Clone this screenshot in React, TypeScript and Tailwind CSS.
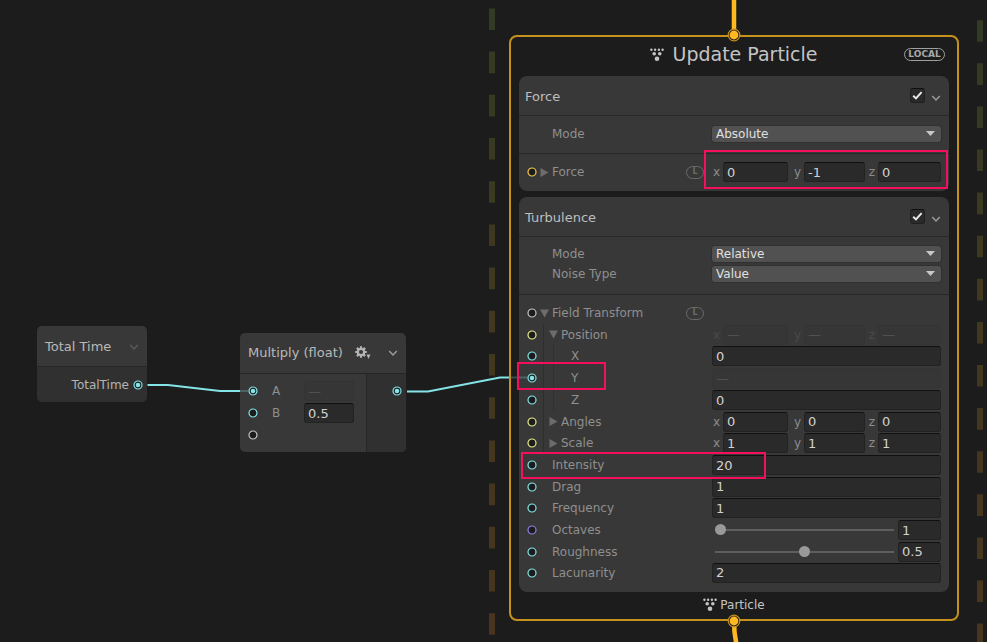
import type { ReactNode } from "react";
import clsx from "clsx";

type PortColor = "cyan" | "yellow" | "orange" | "purple" | "gray";

const portStroke: Record<PortColor, string> = {
  cyan: "#84e4e7",
  yellow: "#e6ec83",
  orange: "#f2c94c",
  purple: "#8f7fe8",
  gray: "#c4c4c4",
};

const Port = ({ color, connected = false }: { color: PortColor; connected?: boolean }) => (
  <svg width="10" height="10" viewBox="0 0 10 10" className="shrink-0">
    <circle cx="5" cy="5" r="4" fill="#1c1c1c" stroke={portStroke[color]} strokeWidth="1.2" />
    {connected && <circle cx="5" cy="5" r="2.3" fill={portStroke[color]} />}
  </svg>
);

const Arrow = ({ open }: { open: boolean }) => (
  <svg width="9" height="9" viewBox="0 0 9 9" className="shrink-0" fill="#6c6c6c">
    {open ? <path d="M0 0.5H9L4.5 8.5Z" /> : <path d="M0.5 0V9L8.5 4.5Z" />}
  </svg>
);

const Chevron = ({ color = "#9a9a9a" }: { color?: string }) => (
  <svg width="10" height="10" viewBox="0 0 10 10" className="shrink-0">
    <path d="M1.2 3L5 7L8.8 3" fill="none" stroke={color} strokeWidth="1.5" />
  </svg>
);

const ParticleIcon = () => (
  <svg width="14" height="14" viewBox="0 0 14 14" fill="#c4c4c4" className="shrink-0">
    <circle cx="1.4" cy="1.8" r="1.2" />
    <circle cx="5.1" cy="1.8" r="1.2" />
    <circle cx="8.9" cy="1.8" r="1.2" />
    <circle cx="12.6" cy="1.8" r="1.2" />
    <circle cx="4.2" cy="5.8" r="1.8" />
    <circle cx="9.8" cy="5.8" r="1.8" />
    <circle cx="7" cy="10.8" r="2.3" />
  </svg>
);

const GearIcon = () => (
  <svg width="16" height="14" viewBox="0 0 16 14" className="shrink-0">
    <circle cx="6" cy="6" r="3.2" fill="none" stroke="#b4b4b4" strokeWidth="2.2" />
    <g stroke="#b4b4b4" strokeWidth="2.2">
      <path d="M6 0.2V2.6M6 9.4V11.8M0.2 6H2.6M9.4 6H11.8" />
      <path d="M1.9 1.9L3.6 3.6M8.4 8.4L10.1 10.1M10.1 1.9L8.4 3.6M3.6 8.4L1.9 10.1" />
    </g>
    <path d="M11.5 8.5H15.5L13.5 13Z" fill="#b4b4b4" />
  </svg>
);

const LocalBadge = () => (
  <span className="flex h-[13px] w-[18px] shrink-0 items-center justify-center rounded-full border border-[#6a6a6a] text-[8px] font-bold leading-none text-[#6a6a6a]">
    L
  </span>
);

const Field = ({ value, label, disabled = false }: { value: string; label: string; disabled?: boolean }) => (
  <input
    type="text"
    aria-label={label}
    defaultValue={value}
    disabled={disabled}
    className={clsx(
      "block h-5 w-full min-w-0 rounded-[3px] border px-[3px] text-[13px] leading-4",
      disabled
        ? "border-[#343434] bg-[#363636] text-[#505050]"
        : "border-[#222222] border-t-[#101010] bg-[#2a2a2a] text-[#d2d2d2]"
    )}
  />
);

const Vector = ({ name, values, disabled = false }: { name: string; values: string[]; disabled?: boolean }) => (
  <div
    className={clsx(
      "grid grid-cols-[11px_65fr_16px_61fr_13px_63fr] items-center text-right text-xs",
      disabled ? "text-[#4a4a4a]" : "text-[#8c8c8c]"
    )}
  >
    {["x", "y", "z"].map((axis, i) => (
      <label key={axis} className="contents">
        <span className="pr-[3px]">{axis}</span>
        <Field label={`${name} ${axis}`} value={values[i]} disabled={disabled} />
      </label>
    ))}
  </div>
);

const Dropdown = ({ id, options }: { id: string; options: string[] }) => (
  <div className="relative">
    <select
      id={id}
      className="block h-4 w-full appearance-none rounded-[3px] bg-[#515151] px-1 text-xs leading-4 text-[#e0e0e0] shadow-[0_0_0_1px_#303030]"
    >
      {options.map((option) => (
        <option key={option}>{option}</option>
      ))}
    </select>
    <svg width="9" height="5" viewBox="0 0 9 5" className="pointer-events-none absolute right-[6px] top-[5px]">
      <path d="M0 0H9L4.5 5Z" fill="#c8c8c8" />
    </svg>
  </div>
);

const Slider = ({ name, value, min, max }: { name: string; value: number; min: number; max: number }) => (
  <div className="flex items-center gap-1 pl-[3px]">
    <input
      type="range"
      aria-label={name}
      min={min}
      max={max}
      step={0.1}
      defaultValue={value}
      className="h-[11px] min-w-0 flex-1 appearance-none bg-transparent [&::-webkit-slider-runnable-track]:h-[2px] [&::-webkit-slider-runnable-track]:bg-[#5e5e5e] [&::-webkit-slider-thumb]:-mt-[5px] [&::-webkit-slider-thumb]:size-[11px] [&::-webkit-slider-thumb]:appearance-none [&::-webkit-slider-thumb]:rounded-full [&::-webkit-slider-thumb]:bg-[#999999]"
    />
    <div className="w-[43px]">
      <Field label={`${name} value`} value={String(value)} />
    </div>
  </div>
);

type RowProps = {
  label: string;
  port?: PortColor;
  connected?: boolean;
  open?: boolean;
  depth?: 0 | 1 | 2;
  local?: boolean;
  height?: string;
  htmlFor?: string;
  children?: ReactNode;
};

const Row = ({ label, port, connected, open, depth = 0, local, height = "h-[22px]", htmlFor, children }: RowProps) => (
  <div className={clsx("flex items-center px-2", height)}>
    <div className="w-[13px] shrink-0">{port && <Port color={port} connected={connected} />}</div>
    {depth > 0 && <div className="ml-[3px] mr-[5px] h-full w-px shrink-0 bg-[#2e2e2e]" />}
    {depth > 1 && <div className="ml-1 mr-[17px] h-full w-px shrink-0 bg-[#303030]" />}
    {depth < 2 && <div className="w-3 shrink-0">{open !== undefined && <Arrow open={open} />}</div>}
    <label htmlFor={htmlFor} className="flex-1 truncate text-xs text-[#8f8f8f]">
      {label}
    </label>
    {local && <LocalBadge />}
    <div className="ml-2 w-[229px] shrink-0">{children}</div>
  </div>
);

const Block = ({ title, children }: { title: string; children: ReactNode }) => (
  <section className="divide-y divide-[#282828] rounded-lg bg-[#383838]">
    <header className="flex h-10 items-center gap-1.5 pl-1.5 pr-2">
      <h2 className="flex-1 pt-[3px] text-[13px] text-[#bebebe]">{title}</h2>
      <span className="relative size-[15px]">
        <input
          type="checkbox"
          defaultChecked
          aria-label={`Enable ${title}`}
          className="block size-[15px] appearance-none rounded-[3px] border border-[#202020] border-t-[#101010] bg-[#2a2a2a]"
        />
        <svg width="15" height="15" viewBox="0 0 15 15" className="pointer-events-none absolute inset-0">
          <path d="M3.2 7.8L6 10.4L11.6 4.2" fill="none" stroke="#e8e8e8" strokeWidth="2" />
        </svg>
      </span>
      <button aria-label={`Collapse ${title}`} className="pt-1">
        <Chevron />
      </button>
    </header>
    {children}
  </section>
);

const FlowPort = () => (
  <svg width="14" height="14" viewBox="0 0 14 14">
    <circle cx="7" cy="7" r="5.8" fill="#1c1c1c" stroke="#c4911c" strokeWidth="1.2" />
    <circle cx="7" cy="7" r="4.4" fill="#ffb821" />
  </svg>
);

const UpdateContext = () => (
  <article className="absolute left-[509px] top-[35px] w-[450px] rounded-lg border-2 border-[#c4911c] bg-[#1c1c1c] px-2">
    <header className="relative flex h-[39px] items-center justify-center gap-2 pb-1">
      <ParticleIcon />
      <h1 className="text-[19px] text-[#c4c4c4]">Update Particle</h1>
      <span className="absolute right-1 top-[11px] flex h-[13px] w-[41px] items-center justify-center rounded-full border border-[#a0a0a0] text-[9px] font-bold leading-none text-[#a8a8a8]">
        LOCAL
      </span>
    </header>
    <div className="flex flex-col gap-1.5">
      <Block title="Force">
        <div className="pb-2 pt-[7px]">
          <Row label="Mode" htmlFor="force-mode">
            <Dropdown id="force-mode" options={["Absolute", "Relative"]} />
          </Row>
        </div>
        <div className="pb-2 pt-[7px]">
          <Row label="Force" port="orange" open={false} local>
            <Vector name="Force" values={["0", "-1", "0"]} />
          </Row>
        </div>
      </Block>
      <Block title="Turbulence">
        <div className="pb-[10px] pt-[7px]">
          <Row label="Mode" htmlFor="turbulence-mode" height="h-5">
            <Dropdown id="turbulence-mode" options={["Relative", "Absolute"]} />
          </Row>
          <Row label="Noise Type" htmlFor="noise-type" height="h-5">
            <Dropdown id="noise-type" options={["Value", "Perlin", "Cellular"]} />
          </Row>
        </div>
        <div className="pb-[9px] pt-[7px]">
          <Row label="Field Transform" port="gray" open local />
          <Row label="Position" port="yellow" open depth={1} height="h-[21px]">
            <Vector name="Position" values={["—", "—", "—"]} disabled />
          </Row>
          <Row label="X" port="cyan" depth={2}>
            <Field label="Position X" value="0" />
          </Row>
          <Row label="Y" port="cyan" connected depth={2}>
            <Field label="Position Y" value="—" disabled />
          </Row>
          <Row label="Z" port="cyan" depth={2}>
            <Field label="Position Z" value="0" />
          </Row>
          <Row label="Angles" port="yellow" open={false} depth={1} height="h-[21px]">
            <Vector name="Angles" values={["0", "0", "0"]} />
          </Row>
          <Row label="Scale" port="yellow" open={false} depth={1}>
            <Vector name="Scale" values={["1", "1", "1"]} />
          </Row>
          <Row label="Intensity" port="cyan">
            <Field label="Intensity" value="20" />
          </Row>
          <Row label="Drag" port="cyan" height="h-[21px]">
            <Field label="Drag" value="1" />
          </Row>
          <Row label="Frequency" port="cyan">
            <Field label="Frequency" value="1" />
          </Row>
          <Row label="Octaves" port="purple">
            <Slider name="Octaves" value={1} min={1} max={8} />
          </Row>
          <Row label="Roughness" port="cyan" height="h-[21px]">
            <Slider name="Roughness" value={0.5} min={0} max={1} />
          </Row>
          <Row label="Lacunarity" port="cyan" height="h-[21px]">
            <Field label="Lacunarity" value="2" />
          </Row>
        </div>
      </Block>
    </div>
    <footer className="flex h-[27px] items-center justify-center gap-[3px] pb-[2px] text-xs text-[#c4c4c4]">
      <ParticleIcon />
      Particle
    </footer>
    <div className="absolute -top-[9px] left-[216px]">
      <FlowPort />
    </div>
    <div className="absolute -bottom-[9px] left-[216px]">
      <FlowPort />
    </div>
  </article>
);

const TotalTimeNode = () => (
  <article className="absolute left-[37px] top-[326px] w-[110px] overflow-hidden rounded-[5px] bg-[#303030]">
    <header className="flex h-10 items-center justify-between bg-[#383838] px-2 pt-[2px]">
      <h2 className="whitespace-nowrap text-[13px] text-[#b8b8b8]">Total Time</h2>
      <button aria-label="Collapse Total Time">
        <Chevron color="#5a5a5a" />
      </button>
    </header>
    <div className="flex h-9 items-center justify-end gap-1 border-t border-[#262626] pr-1 text-xs text-[#b4b4b4]">
      TotalTime
      <Port color="cyan" connected />
    </div>
  </article>
);

const MultiplyNode = () => (
  <article className="absolute left-[240px] top-[333px] w-[166px] overflow-hidden rounded-[5px] bg-[#383838]">
    <header className="flex h-10 items-center px-2">
      <h2 className="whitespace-nowrap text-[13px] text-[#b8b8b8]">Multiply (float)</h2>
      <button aria-label="Multiply settings" className="ml-3">
        <GearIcon />
      </button>
      <button aria-label="Collapse Multiply" className="ml-auto">
        <Chevron />
      </button>
    </header>
    <div className="flex border-t border-[#262626]">
      <div className="flex-1 pb-[6px] pl-2 pr-3 pt-[6px] text-xs text-[#8f8f8f]">
        <label className="flex h-[22px] items-center">
          <Port color="cyan" connected />
          <span className="ml-[14px] flex-1">A</span>
          <span className="w-[50px]">
            <Field label="A" value="—" disabled />
          </span>
        </label>
        <label className="flex h-[22px] items-center">
          <Port color="cyan" />
          <span className="ml-[14px] flex-1">B</span>
          <span className="w-[50px]">
            <Field label="B" value="0.5" />
          </span>
        </label>
        <div className="flex h-[22px] items-center">
          <Port color="gray" />
        </div>
      </div>
      <div className="flex w-10 justify-end border-l border-[#262626] bg-[#303030] pr-1 pt-3">
        <Port color="cyan" connected />
      </div>
    </div>
  </article>
);

const Backdrop = () => (
  <svg width="987" height="642" viewBox="0 0 987 642" className="absolute left-0 top-0" fill="none">
    <defs>
      <linearGradient id="system" gradientUnits="userSpaceOnUse" x1="0" y1="0" x2="0" y2="642">
        <stop offset="0" stopColor="#323b24" />
        <stop offset="0.5" stopColor="#41381e" />
        <stop offset="1" stopColor="#48351d" />
      </linearGradient>
    </defs>
    <path d="M492 8.4V642" stroke="url(#system)" strokeWidth="6" strokeDasharray="21.6 21.6" />
    <path d="M980 20.2V642" stroke="url(#system)" strokeWidth="6" strokeDasharray="21.6 21.5" />
    <path d="M734 0V35" stroke="#ffb821" strokeWidth="4.5" />
    <path d="M734 621C734 632 734.5 636 736.5 644" stroke="#ffb821" strokeWidth="4.5" />
  </svg>
);

const Wires = () => (
  <svg width="987" height="642" viewBox="0 0 987 642" className="pointer-events-none absolute left-0 top-0" fill="none" stroke="#84e4e7" strokeWidth="2">
    <path d="M147.5 385H168L220 391H240" />
    <path d="M240 391H248M511 377.5H527" opacity="0.25" />
    <path d="M407 391.5H428L500 377.5H509" />
  </svg>
);

const App = () => {
  return (
    <main className="relative min-h-screen overflow-hidden bg-[#1c1c1c] font-['DejaVu_Sans',sans-serif]">
      <Backdrop />
      <TotalTimeNode />
      <MultiplyNode />
      <UpdateContext />
      <Wires />

      {/* Highlights */}
      <div className="pointer-events-none absolute left-[704px] top-[150px] h-[39px] w-[244px] border-2 border-[#f5105f]" />
      <div className="pointer-events-none absolute left-[517px] top-[362px] h-[28px] w-[89px] border-2 border-[#f5105f]" />
      <div className="pointer-events-none absolute left-[521px] top-[452px] h-[27px] w-[245px] border-2 border-[#f5105f]" />
    </main>
  );
};

export default App;
